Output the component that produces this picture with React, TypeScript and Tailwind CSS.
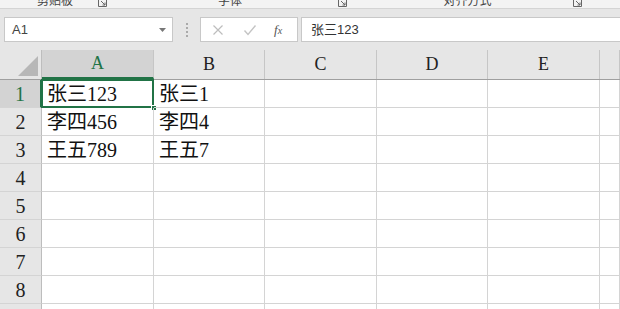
import React from "react";

const cols = ["A", "B", "C", "D", "E", ""];
const colW = ["w-[112px]", "w-[111px]", "w-[112px]", "w-[111px]", "w-[112px]", "flex-1"];

const data: string[][] = [
  ["张三123", "张三1"],
  ["李四456", "李四4"],
  ["王五789", "王五7"],
  [],
  [],
  [],
  [],
  [],
  [],
];

function Launcher() {
  return (
    <svg width="9" height="9" viewBox="0 0 9 9" className="absolute right-[3px] top-[-2px]">
      <path d="M0.5 0.5v8h8v-8" fill="none" stroke="#666" strokeWidth="1" />
      <path d="M3 3l4 4M7 4.5v2.5h-2.5" fill="none" stroke="#666" strokeWidth="1" />
    </svg>
  );
}

function Group({ w, label }: { w: string; label: string }) {
  return (
    <div className={`relative h-full ${w} flex justify-center`}>
      <span className="text-[12px] leading-[12px] mt-[-6px] text-[#444] font-['Noto_Sans_CJK_SC',sans-serif]">
        {label}
      </span>
      <Launcher />
    </div>
  );
}

export default function App() {
  return (
    <div className="w-[620px] h-[309px] overflow-hidden bg-white font-['Liberation_Sans','Noto_Sans_CJK_SC',sans-serif]">
      {/* ribbon bottom edge */}
      <div className="h-[9px] bg-[#f3f3f3] border-b border-[#d4d4d4] flex overflow-hidden">
        <Group w="w-[110px]" label="剪贴板" />
        <Group w="w-[240px]" label="字体" />
        <Group w="w-[235px]" label="对齐方式" />
      </div>

      {/* formula bar */}
      <div className="h-[41px] bg-[#e6e6e6] flex items-center pl-[4px] gap-0">
        <div className="w-[169px] h-[25px] bg-white border border-[#c8c8c8] flex items-center justify-between pl-[7px] pr-[6px]">
          <span className="text-[13px] text-[#444]">A1</span>
          <svg width="7" height="4" viewBox="0 0 7 4">
            <path d="M0 0h7L3.5 4z" fill="#777" />
          </svg>
        </div>
        <div className="w-[27px] flex flex-col items-center gap-[2px]">
          <span className="w-[2px] h-[2px] bg-[#aaa]" />
          <span className="w-[2px] h-[2px] bg-[#aaa]" />
          <span className="w-[2px] h-[2px] bg-[#aaa]" />
          <span className="w-[2px] h-[2px] bg-[#aaa]" />
        </div>
        <div className="w-[98px] h-[25px] bg-white border border-[#c8c8c8] flex items-center pl-[11px]">
          <svg width="12" height="12" viewBox="0 0 12 12">
            <path d="M1.5 1.5l9 9M10.5 1.5l-9 9" stroke="#bdbdbd" strokeWidth="1.2" />
          </svg>
          <svg width="14" height="12" viewBox="0 0 14 12" className="ml-[19px]">
            <path d="M1.5 6.5l3.5 4 7.5-9" fill="none" stroke="#c4c4c4" strokeWidth="1.4" />
          </svg>
          <span className="ml-[17px] text-[13px] italic text-[#555] font-['Liberation_Serif',serif]">
            f<span className="text-[10px]">x</span>
          </span>
        </div>
        <div className="flex-1 h-[25px] ml-[3px] bg-white border border-[#c8c8c8] border-r-0 flex items-center pl-[9px]">
          <span className="text-[13px] text-[#333] font-['Noto_Sans_CJK_SC',sans-serif]">
            张三<span className="font-['Liberation_Sans',sans-serif]">123</span>
          </span>
        </div>
      </div>

      {/* grid */}
      <div className="font-['Liberation_Serif','Noto_Sans_CJK_SC',serif]">
        <div className="flex h-[30px] bg-[#e6e6e6] border-b border-[#9f9f9f]">
          <div className="w-[42px] relative border-r border-[#bdbdbd]">
            <svg width="20" height="20" viewBox="0 0 20 20" className="absolute right-[3px] bottom-[3px]">
              <path d="M20 0V20H0z" fill="#b7b7b7" />
            </svg>
          </div>
          {cols.map((c, i) => (
            <div
              key={i}
              className={`${colW[i]} flex items-center justify-center text-[18px] border-r border-[#c6c6c6] ${
                i === 0 ? "bg-[#d3d3d3] text-[#217346] border-b-2 border-b-[#217346]" : "text-[#222]"
              }`}
            >
              {c}
            </div>
          ))}
        </div>
        {data.map((row, r) => (
          <div key={r} className="flex h-[28px]">
            <div
              className={`w-[42px] flex items-center justify-center text-[20px] border-b border-r border-[#bdbdbd] border-b-[#d4d4d4] ${
                r === 0 ? "bg-[#d3d3d3] text-[#217346] border-r-2 border-r-[#217346]" : "bg-[#e6e6e6] text-[#222]"
              }`}
            >
              {r + 1}
            </div>
            {cols.map((_, i) => (
              <div
                key={i}
                className={`${colW[i]} relative flex items-center pl-[5px] text-[20px] text-[#111] border-r border-b border-[#d4d4d4] whitespace-nowrap`}
              >
                {row[i] ?? ""}
                {r === 0 && i === 0 && (
                  <>
                    <div className="absolute left-[-1px] top-[-1px] right-[-1px] bottom-[-1px] border-2 border-[#217346] pointer-events-none" />
                    <div className="absolute right-[-4px] bottom-[-4px] w-[6px] h-[6px] bg-[#217346] border border-white" />
                  </>
                )}
              </div>
            ))}
          </div>
        ))}
      </div>
    </div>
  );
}
